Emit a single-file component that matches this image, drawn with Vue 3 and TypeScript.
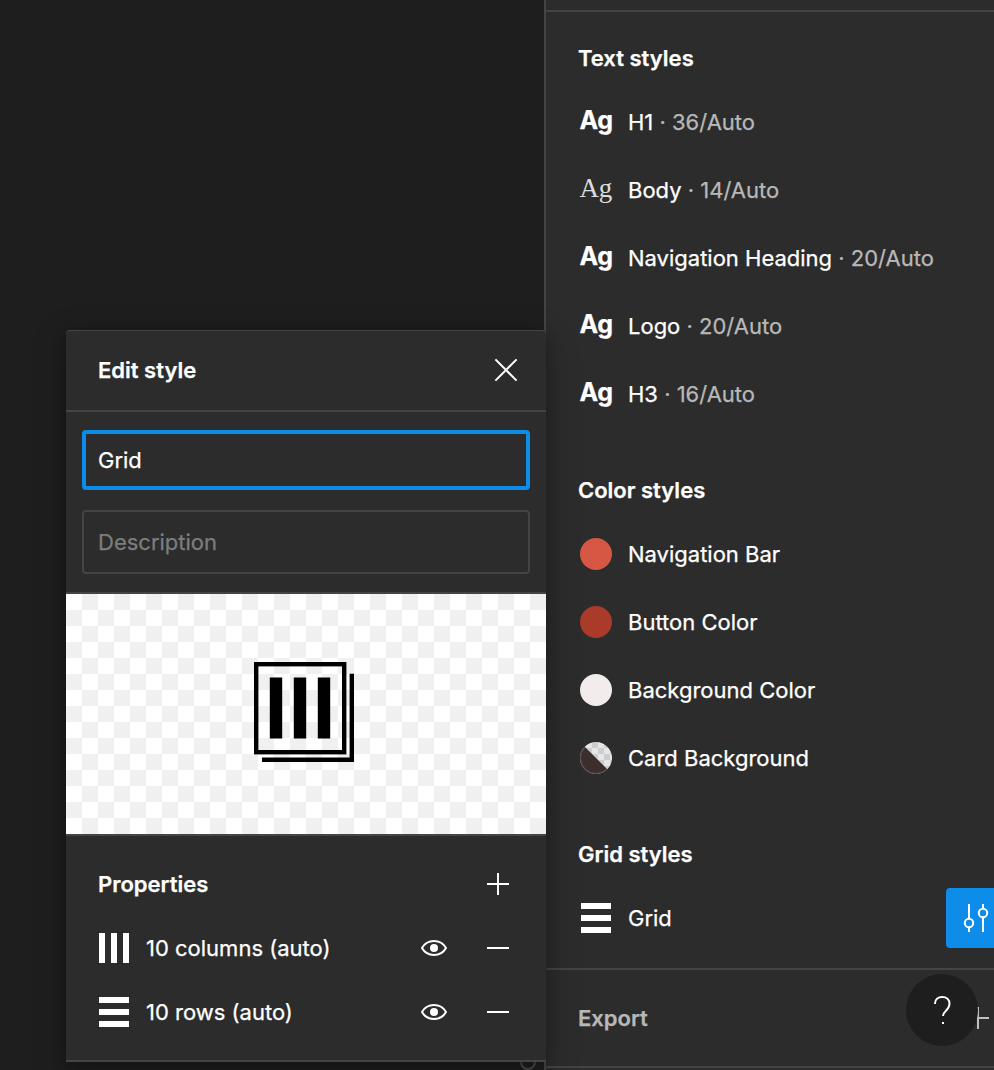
<script setup lang="ts">
interface TextStyle {
  name: string
  size: number
  serif?: boolean
}

interface ColorStyle {
  name: string
  swatch: string
}

interface GridProperty {
  label: string
  kind: 'columns' | 'rows'
}

const textStyles: TextStyle[] = [
  { name: 'H1', size: 36 },
  { name: 'Body', size: 14, serif: true },
  { name: 'Navigation Heading', size: 20 },
  { name: 'Logo', size: 20 },
  { name: 'H3', size: 16 },
]

const colorStyles: ColorStyle[] = [
  { name: 'Navigation Bar', swatch: 'coral' },
  { name: 'Button Color', swatch: 'brick' },
  { name: 'Background Color', swatch: 'blush' },
  { name: 'Card Background', swatch: 'split' },
]

const gridProperties: GridProperty[] = [
  { label: '10 columns (auto)', kind: 'columns' },
  { label: '10 rows (auto)', kind: 'rows' },
]
</script>

<template>
  <div class="editor">
    <aside class="sidebar">
      <div class="sidebar-top"></div>
      <div class="styles">
        <section class="group">
          <h2 class="title">Text styles</h2>
          <div v-for="style in textStyles" :key="style.name" class="row">
            <span class="specimen" :class="{ serif: style.serif }">Ag</span>
            <span class="label">{{ style.name }}<span class="meta"> · {{ style.size }}/Auto</span></span>
          </div>
        </section>

        <section class="group">
          <h2 class="title">Color styles</h2>
          <div v-for="style in colorStyles" :key="style.name" class="row">
            <svg v-if="style.swatch === 'split'" class="lead" width="32" height="32" viewBox="0 0 32 32">
              <defs>
                <clipPath id="disc"><circle cx="16" cy="16" r="16" /></clipPath>
                <pattern id="checks" width="12" height="12" patternUnits="userSpaceOnUse">
                  <rect width="12" height="12" fill="#e6e6e6" />
                  <path d="M0 0h6v6H0zM6 6h6v6H6z" fill="#cdcdcd" />
                </pattern>
              </defs>
              <g clip-path="url(#disc)">
                <rect width="32" height="32" fill="url(#checks)" />
                <path d="M0 0L32 32H0z" fill="#3d2e2e" />
              </g>
              <circle cx="16" cy="16" r="15.5" fill="none" stroke="#fff" stroke-opacity="0.15" />
            </svg>
            <span v-else class="lead disc" :class="style.swatch"></span>
            <span class="label">{{ style.name }}</span>
          </div>
        </section>

        <section class="group">
          <h2 class="title">Grid styles</h2>
          <div class="row">
            <svg class="lead" width="32" height="32" viewBox="0 0 32 32" fill="#fff">
              <path d="M1 1h30v6H1zM1 13h30v6H1zM1 25h30v6H1z" />
            </svg>
            <span class="label">Grid</span>
            <button class="adjust" type="button" aria-label="Edit style">
              <svg width="48" height="60" viewBox="0 0 48 60" fill="none" stroke="#fff" stroke-width="2">
                <path d="M23 16v14.500M23 39.500v4.500M37 16v4.500M37 29.500v14.500" />
                <circle cx="23" cy="35" r="4.2" />
                <circle cx="37" cy="25" r="4.2" />
              </svg>
            </button>
          </div>
        </section>
      </div>

      <div class="export">
        <h2 class="title muted">Export</h2>
        <svg class="export-add" width="24" height="24" viewBox="0 0 24 24" stroke="#c0c0c0" stroke-width="2">
          <path d="M12 1v22M1 12h22" />
        </svg>
      </div>
    </aside>

    <svg class="canvas-handle" width="16" height="16" viewBox="0 0 16 16" fill="none" stroke="#4b4b4b" stroke-width="2">
      <circle cx="8" cy="8" r="7" />
    </svg>

    <div class="dialog">
      <header class="dialog-header">
        <h2 class="title">Edit style</h2>
        <svg class="close" width="24" height="24" viewBox="0 0 24 24" stroke="#fff" stroke-width="2">
          <path d="M1.4 1.4L22.6 22.6M22.6 1.4L1.4 22.6" />
        </svg>
      </header>

      <div class="fields">
        <div class="field focused">Grid</div>
        <div class="field description">Description</div>
      </div>

      <div class="preview">
        <svg width="100" height="100" viewBox="0 0 100 100">
          <rect x="2.2" y="2.2" width="88" height="88" fill="none" stroke="#000" stroke-width="4.4" />
          <path d="M15.800 15.600h12.400v60.800H15.800zM39.800 15.600h12.400v60.800H39.800zM63.800 15.600h12.400v60.800H63.800z" />
          <path d="M97.800 11.800v86H8" fill="none" stroke="#000" stroke-width="4.400" />
        </svg>
      </div>

      <div class="properties">
        <div class="property heading">
          <h2 class="title">Properties</h2>
          <svg class="action" width="24" height="24" viewBox="0 0 24 24" stroke="#fff" stroke-width="2">
            <path d="M12 1v22M1 12h22" />
          </svg>
        </div>
        <div v-for="property in gridProperties" :key="property.label" class="property">
          <svg class="kind" width="32" height="32" viewBox="0 0 32 32" fill="#fff">
            <path v-if="property.kind === 'columns'" d="M1 1h6v30H1zM13 1h6v30h-6zM25 1h6v30h-6z" />
            <path v-else d="M1 1h30v6H1zM1 13h30v6H1zM1 25h30v6H1z" />
          </svg>
          <span class="label">{{ property.label }}</span>
          <svg class="eye" width="28" height="18" viewBox="0 0 28 18">
            <path d="M2 9C4.5 4.5 8.8 2 14 2s9.500 2.500 12 7c-2.500 4.500-6.800 7-12 7S4.500 13.500 2 9z" fill="none" stroke="#fff" stroke-width="2" />
            <circle cx="14" cy="9" r="4" fill="#fff" />
          </svg>
          <svg class="action" width="24" height="24" viewBox="0 0 24 24" stroke="#fff" stroke-width="2">
            <path d="M1 12h22" />
          </svg>
        </div>
      </div>
    </div>

    <button class="help" type="button" aria-label="Help">
      <svg width="72" height="72" viewBox="0 0 72 72" fill="none" stroke="#fff" stroke-width="2">
        <path d="M29 30v-.5c0-4 3-6.500 7.200-6.500s7.300 2.700 7.300 6.800c0 3.200-1.600 4.900-3.500 6.900-1.700 1.700-3 2.900-3 5.300" />
        <path d="M36 49h2" />
      </svg>
    </button>
  </div>
</template>

<style>
body {
  margin: 0;
  background: #1e1e1e;
}
</style>

<style scoped>
.editor {
  position: relative;
  display: flex;
  justify-content: flex-end;
  width: 994px;
  height: 1070px;
  overflow: hidden;
  background: #1e1e1e;
  color: #fff;
  font-family: Inter, "Liberation Sans", sans-serif;
  font-size: 22px;
  line-height: 32px;
  -webkit-text-stroke: 0.25px currentColor;
}

.sidebar {
  box-sizing: border-box;
  width: 450px;
  height: 1070px;
  border-left: 2px solid #444;
  background: #2c2c2c;
}

.sidebar-top {
  height: 10px;
  border-bottom: 2px solid #444;
}

.styles {
  display: flex;
  flex-direction: column;
  gap: 32px;
  padding: 16px 0;
  border-bottom: 2px solid #444;
}

.title {
  margin: 0;
  font-size: 22px;
  font-weight: 600;
  line-height: 32px;
  white-space: nowrap;
}

.group .title {
  padding: 14px 32px;
}

.title.muted {
  color: #b8b8b8;
}

.row {
  display: flex;
  align-items: center;
  height: 68px;
  padding-left: 34px;
}

.specimen,
.lead {
  flex: none;
  width: 32px;
  margin-right: 16px;
}

.specimen {
  padding-bottom: 4px;
  font-size: 25px;
  font-weight: 700;
  letter-spacing: -0.3px;
  text-indent: -0.5px;
  white-space: nowrap;
}

.specimen.serif {
  color: #dcdcdc;
  font-family: "Liberation Serif", serif;
  font-size: 27px;
  font-weight: 400;
  -webkit-text-stroke: 0;
}

.label {
  white-space: nowrap;
}

.meta {
  color: #b8b8b8;
}

.disc {
  height: 32px;
  border-radius: 50%;
}

.coral {
  background: #d75745;
}

.brick {
  background: #aa3a2a;
}

.blush {
  background: #f2ecec;
}

.adjust {
  width: 48px;
  height: 60px;
  margin-left: auto;
  padding: 0;
  border: 0;
  border-radius: 4px 0 0 4px;
  background: #0d8ce9;
}

.adjust svg {
  display: block;
}

.export {
  display: flex;
  align-items: center;
  justify-content: space-between;
  height: 96px;
  padding-left: 32px;
  padding-right: 4px;
  border-bottom: 2px solid #444;
}

.canvas-handle {
  position: absolute;
  left: 520px;
  top: 1054px;
}

.dialog {
  position: absolute;
  left: 66px;
  top: 330px;
  width: 480px;
  height: 732px;
  border-radius: 4px 4px 0 0;
  background: #2c2c2c;
  box-shadow: 0 10px 34px rgba(0, 0, 0, 0.25), 0 4px 14px rgba(0, 0, 0, 0.2);
}

.dialog-header {
  box-sizing: border-box;
  display: flex;
  align-items: center;
  justify-content: space-between;
  height: 82px;
  padding: 0 28px 1px 32px;
  border-bottom: 2px solid #444;
  border-radius: 4px 4px 0 0;
  box-shadow: inset 0 1px #444;
}

.fields {
  display: flex;
  flex-direction: column;
  gap: 20px;
  padding: 18px 16px;
  border-bottom: 2px solid #444;
}

.field {
  box-sizing: border-box;
  display: flex;
  align-items: center;
  height: 60px;
  padding: 0 12px;
  border: 4px solid #0d8ce9;
  border-radius: 4px;
}

.field.description {
  height: 64px;
  padding: 0 14px;
  border: 2px solid #444;
  color: #7d7d7d;
}

.preview {
  box-sizing: border-box;
  height: 240px;
  padding: 68px 188px;
  background: conic-gradient(#f0f0f0 25%, #fff 0 50%, #f0f0f0 0 75%, #fff 0) 0 0 / 32px 32px;
}

.preview svg {
  display: block;
}

.properties {
  box-sizing: border-box;
  height: 228px;
  padding-top: 16px;
  border-top: 2px solid #444;
  border-bottom: 2px solid #444;
}

.property {
  display: flex;
  align-items: center;
  height: 64px;
  padding: 0 36px 0 32px;
}

.heading {
  justify-content: space-between;
}

.kind {
  margin-right: 16px;
}

.eye {
  margin-left: auto;
  margin-right: 38px;
}

.help {
  position: absolute;
  left: 906px;
  top: 974px;
  width: 72px;
  height: 72px;
  padding: 0;
  border: 0;
  border-radius: 50%;
  background: #1e1e1e;
}

.help svg {
  display: block;
}
</style>
